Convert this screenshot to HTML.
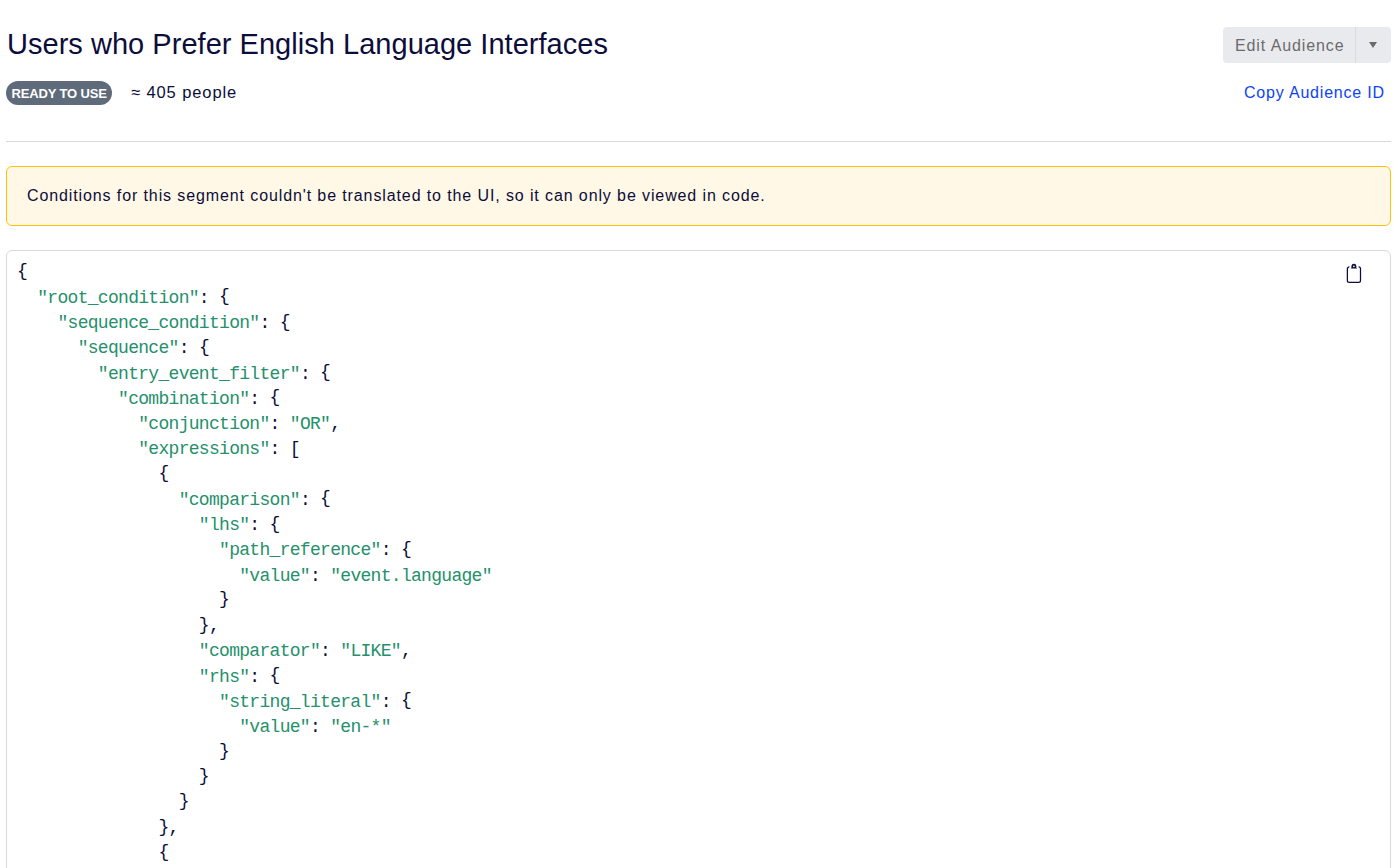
<!DOCTYPE html>
<html><head><meta charset="utf-8">
<style>
html,body{margin:0;padding:0;background:#fff;width:1398px;height:868px;overflow:hidden;}
body{font-family:"Liberation Sans",sans-serif;color:#0c0d3a;position:relative;}
.abs{position:absolute;white-space:pre;}
#title{left:7px;top:26px;font-size:29px;line-height:36px;letter-spacing:0.03px;}
#badge{left:6px;top:81px;width:106px;height:24px;border-radius:12px;background:#5f6b7a;}
#badgetxt{left:11.5px;top:84.8px;font-size:13px;line-height:18px;letter-spacing:-0.15px;font-weight:bold;color:#fff;}
#people{left:131px;top:83px;font-size:16.5px;line-height:18px;letter-spacing:0.9px;}
#btn{left:1223px;top:27px;width:168px;height:36px;border-radius:4px;background:#e9eaee;}
#btndiv{left:1355px;top:27px;width:1px;height:36px;background:#d9dbe0;}
#btntxt{left:1235px;top:37px;font-size:16px;line-height:18px;letter-spacing:0.9px;color:#6b6b6b;}
#caret{left:1369px;top:42px;width:0;height:0;border-left:4.2px solid transparent;border-right:4.2px solid transparent;border-top:6px solid #6b6b6b;}
#copy{left:1244px;top:84px;font-size:16px;line-height:18px;letter-spacing:0.8px;color:#0b44f6;}
#hr{left:6px;top:141px;width:1385px;height:1px;background:#d9d9d9;}
#alert{left:6px;top:166px;width:1383px;height:58px;border:1px solid #ffc10a;border-radius:6px;background:#fff8e6;}
#alerttxt{left:27px;top:187px;font-size:16px;line-height:18px;letter-spacing:0.89px;}
#code{left:6px;top:250px;width:1383px;height:700px;border:1px solid #d9d9d9;border-radius:6px;background:#fff;}
#pre{left:17px;top:260.5px;margin:0;font-family:"Liberation Mono",monospace;font-size:18px;line-height:25.25px;letter-spacing:-0.7px;color:#0c0d3a;}
.k{color:#25906b;}
.b{position:relative;top:-1.5px;}
#clip{left:1340px;top:258px;width:30px;height:30px;}
</style></head><body>
<div class="abs" id="title">Users who Prefer English Language Interfaces</div>
<div class="abs" id="badge"></div>
<div class="abs" id="badgetxt">READY TO USE</div>
<div class="abs" id="people">≈ 405 people</div>
<div class="abs" id="btn"></div>
<div class="abs" id="btndiv"></div>
<div class="abs" id="btntxt">Edit Audience</div>
<div class="abs" id="caret"></div>
<div class="abs" id="copy">Copy Audience ID</div>
<div class="abs" id="hr"></div>
<div class="abs" id="alert"></div>
<div class="abs" id="alerttxt">Conditions for this segment couldn't be translated to the UI, so it can only be viewed in code.</div>
<div class="abs" id="code"></div>
<pre class="abs" id="pre"><span class="b">{</span>
  <span class="k">"root_condition"</span>: <span class="b">{</span>
    <span class="k">"sequence_condition"</span>: <span class="b">{</span>
      <span class="k">"sequence"</span>: <span class="b">{</span>
        <span class="k">"entry_event_filter"</span>: <span class="b">{</span>
          <span class="k">"combination"</span>: <span class="b">{</span>
            <span class="k">"conjunction"</span>: <span class="k">"OR"</span>,
            <span class="k">"expressions"</span>: [
              <span class="b">{</span>
                <span class="k">"comparison"</span>: <span class="b">{</span>
                  <span class="k">"lhs"</span>: <span class="b">{</span>
                    <span class="k">"path_reference"</span>: <span class="b">{</span>
                      <span class="k">"value"</span>: <span class="k">"event.language"</span>
                    <span class="b">}</span>
                  <span class="b">}</span>,
                  <span class="k">"comparator"</span>: <span class="k">"LIKE"</span>,
                  <span class="k">"rhs"</span>: <span class="b">{</span>
                    <span class="k">"string_literal"</span>: <span class="b">{</span>
                      <span class="k">"value"</span>: <span class="k">"en-*"</span>
                    <span class="b">}</span>
                  <span class="b">}</span>
                <span class="b">}</span>
              <span class="b">}</span>,
              <span class="b">{</span>
</pre>
<svg class="abs" id="clip" viewBox="0 0 30 30">
<path d="M9.4 8.9 H9.3 A1.9 1.9 0 0 0 7.37 10.8 V22.4 A1.9 1.9 0 0 0 9.27 24.3 H18.6 A1.9 1.9 0 0 0 20.5 22.4 V10.8 A1.9 1.9 0 0 0 18.6 8.9 H18.6" fill="none" stroke="#0c0d3a" stroke-width="1.25"/>
<path d="M10.6 10.6 H17.2 L16.2 9.5 A2.55 2.55 0 1 0 11.6 9.5 Z" fill="#0c0d3a"/>
<circle cx="13.9" cy="8.35" r="0.85" fill="#fff"/>
</svg>
</body></html>
